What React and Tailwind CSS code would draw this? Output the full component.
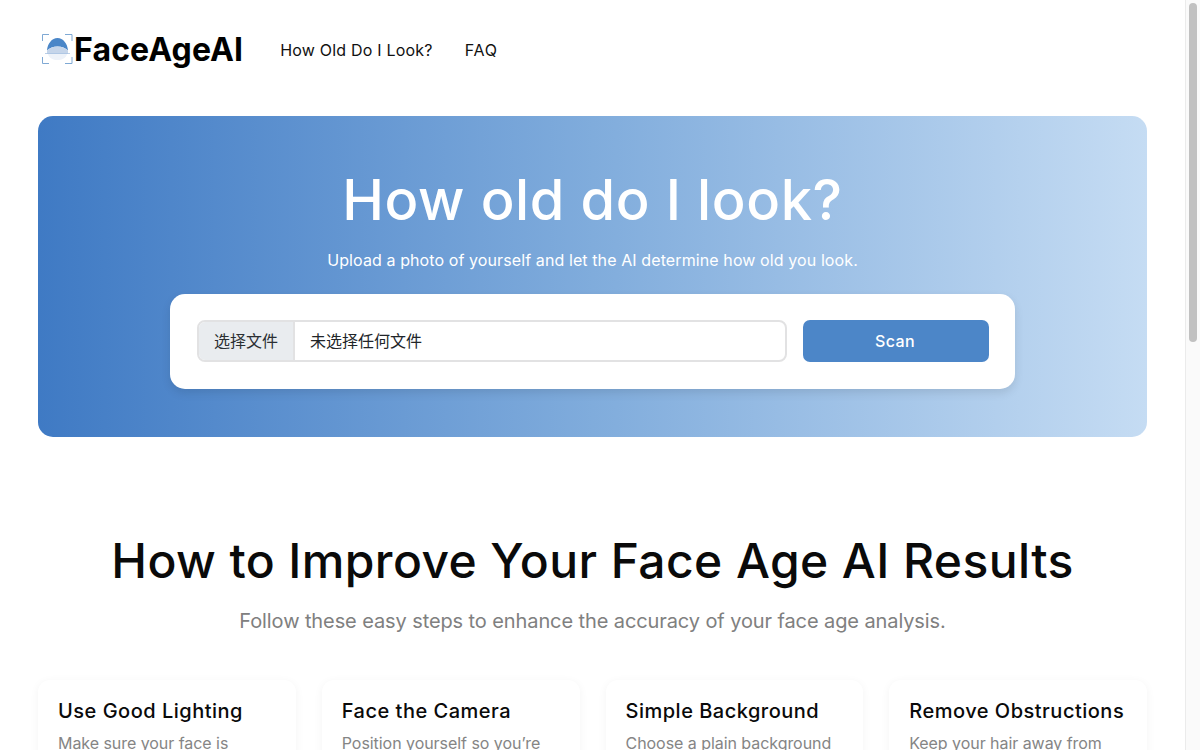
const sans = "font-['Inter','Noto_Sans_CJK_SC',sans-serif]";

function Logo() {
  return (
    <svg width="32" height="32" viewBox="0 0 32 32" fill="none" className="shrink-0">
      <g stroke="#7fa9d4" strokeWidth="1">
        <path d="M0.500 7V0.500H7" />
        <path d="M23 0.500H30V7" />
        <path d="M0.500 23V29.500H7" />
        <path d="M23 29.500H30V23" />
      </g>
      <path d="M5 16.500C5.500 9.500 10 4 15.500 4S25.500 9.500 26 16.500C23 13.800 20 12.500 15.500 12.500S8 13.800 5 16.500Z" fill="#4a86c8" />
      <path d="M5 16.500C8 13.800 11 12.500 15.500 12.500S23 13.800 26 16.500V20H5Z" fill="#c5d5ea" />
      <path d="M6 20H25C24 24 20 26 15.500 26S7 24 6 20Z" fill="#edf2f9" />
      <path d="M3 19.500H28" stroke="#a9c3e2" strokeWidth="0.800" />
    </svg>
  );
}

const tips = [
  ["Use Good Lighting", "Make sure your face is"],
  ["Face the Camera", "Position yourself so you’re"],
  ["Simple Background", "Choose a plain background"],
  ["Remove Obstructions", "Keep your hair away from"],
];

export default function App() {
  return (
    <div className={`flex h-[750px] w-[1200px] overflow-hidden bg-white ${sans}`}>
      <main className="flex w-[1185px] shrink-0 flex-col px-[38px]">
        <header className="flex h-[116px] shrink-0 items-center pb-[16px] pl-[4px]">
          <div className="flex items-center">
            <Logo />
            <span className="text-[32px] font-bold leading-none tracking-[0.15px] text-black">FaceAgeAI</span>
          </div>
          <nav className="ml-[37px] flex items-center gap-[32px] text-[16px] tracking-[0.2px] text-[#111]">
            <a>How Old Do I Look?</a>
            <a className="tracking-[0.8px]">FAQ</a>
          </nav>
        </header>

        <section className="flex h-[321px] w-[1109px] shrink-0 flex-col items-center rounded-[15px] bg-gradient-to-r from-[#3f7ac4] via-[#80acdc] to-[#c5dcf3] pt-[50px]">
          <h1 className="text-[56px] font-medium leading-[68px] tracking-[0.6px] text-white">How old do I look?</h1>
          <p className="mt-[14px] text-[16px] leading-[24px] tracking-[0.1px] text-white">Upload a photo of yourself and let the AI determine how old you look.</p>
          <div className="mt-[22px] flex h-[95px] w-[845px] items-center gap-[16px] rounded-[15px] bg-white pb-[1px] pl-[27px] pr-[26px] shadow-[0_4px_10px_rgba(0,0,0,0.1)]">
            <div className="flex h-[42px] flex-1 overflow-hidden rounded-[8px] border-2 border-[#e2e2e3] text-[16px]">
              <span className="flex w-[96px] items-center justify-center border-r-2 border-[#e2e2e3] bg-[#e9ecef] text-[#2b2f33]">选择文件</span>
              <span className="flex items-center pl-[15px] text-[#212529]">未选择任何文件</span>
            </div>
            <button className="h-[42px] w-[186px] rounded-[7px] bg-[#4c86c8] pr-[2px] text-[16px] font-medium tracking-[0.4px] text-white">Scan</button>
          </div>
        </section>

        <h2 className="mt-[92px] text-center text-[48px] font-medium leading-[64px] tracking-[0.4px] text-[#0a0a0a]">How to Improve Your Face Age AI Results</h2>
        <p className="mt-[13px] text-center text-[20px] leading-[30px] tracking-[-0.1px] text-[#808080]">Follow these easy steps to enhance the accuracy of your face age analysis.</p>

        <div className="mt-[44px] grid w-[1109px] grid-cols-4 gap-[26px]">
          {tips.map(([title, text]) => (
            <article key={title} className="h-[120px] rounded-[12px] bg-white px-[20px] pt-[16px] shadow-[0_2px_10px_rgba(0,0,0,0.05)]">
              <h3 className="text-[20px] font-medium leading-[30px] tracking-[0.5px] text-[#0a0a0a]">{title}</h3>
              <p className="mt-[5px] text-[16px] leading-[24px] tracking-[-0.05px] text-[#858585]">{text}</p>
            </article>
          ))}
        </div>
      </main>
      <div className="flex w-[15px] shrink-0 justify-center border-l border-[#ebebeb] bg-[#fafafa] pt-[3px]">
        <div className="h-[339px] w-[8px] rounded-full bg-[#c1c1c1]" />
      </div>
    </div>
  );
}
